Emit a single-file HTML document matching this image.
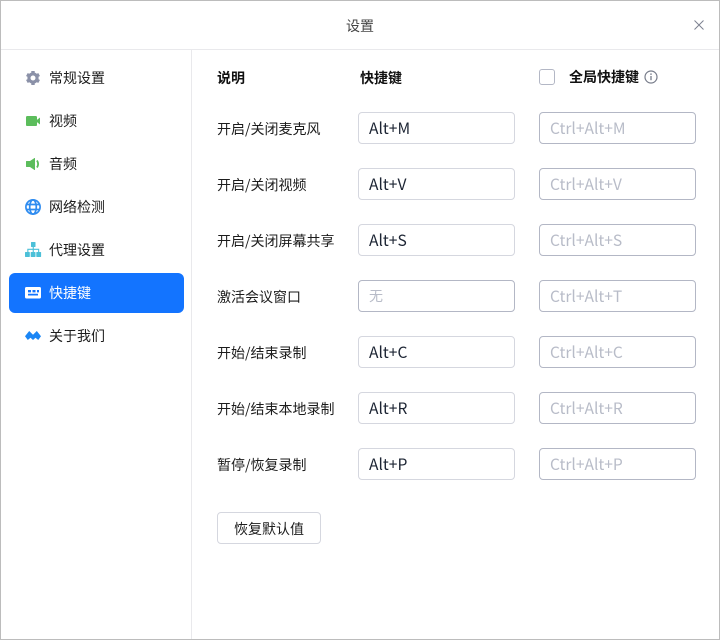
<!DOCTYPE html>
<html lang="zh"><head><meta charset="utf-8"><style>
html,body{margin:0;padding:0}
body{width:720px;height:640px;position:relative;overflow:hidden;background:#fff;font-family:"Noto Sans CJK SC","Liberation Sans",sans-serif;color:#1a1a1a}
.a{position:absolute;white-space:nowrap}
#frame{position:absolute;left:0;top:0;width:718px;height:638px;border:1px solid #bcbcbc}
.t{font-size:14px;line-height:20px;color:#1c1c1c}
.b{font-weight:700;color:#111}
.i{position:absolute;box-sizing:border-box;width:157px;height:32px;border:1px solid #d5d7df;border-radius:4px;font-size:15.6px;line-height:31px;padding-left:10px;color:#1c2433;background:#fff}
.g{left:539px;border-color:#b3b7c5;color:#b8bcc8}
.nav{position:absolute;left:49px;font-size:14px;line-height:20px;color:#1c1c1c;white-space:nowrap}
svg{position:absolute}
</style></head><body>
<div id="frame"></div>
<div class="a" style="left:1px;top:49px;width:718px;height:1px;background:#e9e9ec"></div>
<div class="a" style="left:191px;top:50px;width:1px;height:589px;background:#e9e9ec"></div>
<div class="a" style="left:0;width:720px;top:16px;text-align:center;font-size:14px;line-height:20px;color:#444">设置</div>
<svg style="left:694px;top:20px" width="10" height="10" viewBox="0 0 10 10"><path d="M.5 .5L9.500 9.500M9.500 .5L.5 9.500" stroke="#7c8190" stroke-width="1" fill="none"/></svg>

<div class="a" style="left:9px;top:273px;width:175px;height:40px;background:#1374ff;border-radius:6px"></div>

<svg style="left:0;top:0" width="60" height="350" viewBox="0 0 60 350">
<circle cx="33" cy="78" r="5.600" fill="#8b91a8"/>
<path d="M33 71v14M26.900 74.500l12.200 7M26.900 81.500l12.200-7" stroke="#8b91a8" stroke-width="3.400" fill="none"/>
<circle cx="33" cy="78" r="2.500" fill="#fff"/>
<rect x="26" y="116" width="11" height="10" rx="1.300" fill="#5cbd5c"/>
<path d="M36.500 120.200l3.500-2.700v7l-3.500-2.700z" fill="#5cbd5c"/>
<path fill="#5cbd5c" d="M26.500 161H30l4.500-3h.5v12h-.5L30 167h-3.500a.5.5 0 01-.5-.5v-5a.5.5 0 01.5-.5z"/>
<path fill="none" stroke="#5cbd5c" stroke-width="1.800" d="M37 160.500c1.400 2.200 1.400 4.800 0 7"/>
<g fill="none" stroke="#2f8cf0" stroke-width="1.700"><circle cx="33" cy="207" r="7.100"/><ellipse cx="33" cy="207" rx="3.300" ry="7.100"/><path d="M26 204.500h14M26 209.500h14"/></g>
<g fill="#4cc0d8"><rect x="31" y="242" width="4.500" height="5" rx=".5"/><rect x="25" y="252" width="4.800" height="5" rx=".6"/><rect x="30.700" y="252" width="4.800" height="5" rx=".6"/><rect x="36.300" y="252" width="4.800" height="5" rx=".6"/><path d="M32.700 246h1.100v2.800h5.400V252h-1.100v-2.100h-4.300V252h-1.100v-2.100h-4.300V252h-1.100v-3.200h5.400z"/></g>
<path fill="#fff" fill-rule="evenodd" d="M26.500 287h13a1.500 1.500 0 011.500 1.500v8.500a1.500 1.500 0 01-1.500 1.500h-13A1.500 1.500 0 0125 297v-8.500a1.500 1.500 0 011.500-1.500zM28 290v2.400h3V290zm4.500 0v2.400h3V290zm4.500 0v2.400h2V290zM28 293.800v1.700h10v-1.700z"/>
<path fill="#1b86f5" d="M25 336.200L29.200 331 33 334.800 36.800 331 41 336.200 38.200 340 35.500 337.800 33 340 30.500 337.800 27.800 340z"/>
</svg>

<div class="nav" style="top:68px">常规设置</div>
<div class="nav" style="top:111px">视频</div>
<div class="nav" style="top:154px">音频</div>
<div class="nav" style="top:197px">网络检测</div>
<div class="nav" style="top:240px">代理设置</div>
<div class="nav" style="top:283px;color:#fff">快捷键</div>
<div class="nav" style="top:326px">关于我们</div>

<div class="a t b" style="left:217px;top:68px">说明</div>
<div class="a t b" style="left:360px;top:68px">快捷键</div>
<div class="a" style="box-sizing:border-box;left:539px;top:69px;width:16px;height:16px;border:1px solid #b3b7c5;border-radius:3px"></div>
<div class="a t b" style="left:569px;top:67px">全局快捷键</div>
<svg style="left:644px;top:70px" width="14" height="14" viewBox="0 0 14 14"><circle cx="7" cy="7" r="6" fill="none" stroke="#777c8a" stroke-width="1.200"/><path d="M7 6v4.200" stroke="#777c8a" stroke-width="1.300"/><circle cx="7" cy="4.100" r=".8" fill="#777c8a"/></svg>

<div class="a t" style="left:217px;top:119px">开启/关闭麦克风</div>
<div class="i" style="left:358px;top:112px">Alt+M</div><div class="i g" style="top:112px">Ctrl+Alt+M</div>
<div class="a t" style="left:217px;top:175px">开启/关闭视频</div>
<div class="i" style="left:358px;top:168px">Alt+V</div><div class="i g" style="top:168px">Ctrl+Alt+V</div>
<div class="a t" style="left:217px;top:231px">开启/关闭屏幕共享</div>
<div class="i" style="left:358px;top:224px">Alt+S</div><div class="i g" style="top:224px">Ctrl+Alt+S</div>
<div class="a t" style="left:217px;top:287px">激活会议窗口</div>
<div class="i" style="left:358px;top:280px;border-color:#b3b7c5;color:#b8bcc8;font-size:14px">无</div><div class="i g" style="top:280px">Ctrl+Alt+T</div>
<div class="a t" style="left:217px;top:343px">开始/结束录制</div>
<div class="i" style="left:358px;top:336px">Alt+C</div><div class="i g" style="top:336px">Ctrl+Alt+C</div>
<div class="a t" style="left:217px;top:399px">开始/结束本地录制</div>
<div class="i" style="left:358px;top:392px">Alt+R</div><div class="i g" style="top:392px">Ctrl+Alt+R</div>
<div class="a t" style="left:217px;top:455px">暂停/恢复录制</div>
<div class="i" style="left:358px;top:448px">Alt+P</div><div class="i g" style="top:448px">Ctrl+Alt+P</div>

<div class="a" style="box-sizing:border-box;left:217px;top:512px;width:104px;height:32px;border:1px solid #d5d7df;border-radius:4px;text-align:center;font-size:14px;line-height:32px;color:#1c1c1c">恢复默认值</div>
</body></html>
